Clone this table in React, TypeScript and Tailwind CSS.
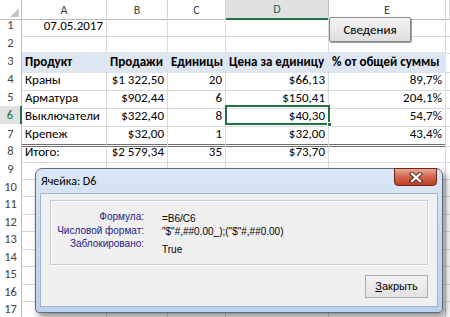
import React from "react";

type Cell = { t?: string; r?: boolean; b?: boolean };

const cols = "grid grid-cols-[22px_85px_61px_58px_103px_117px_1fr]";

const data: Cell[][] = [
  [{ t: "07.05.2017", r: true }, {}, {}, {}, {}],
  [{}, {}, {}, {}, {}],
  [
    { t: "Продукт", b: true },
    { t: "Продажи", b: true },
    { t: "Единицы", b: true },
    { t: "Цена за единицу", b: true },
    { t: "% от общей суммы", b: true },
  ],
  [{ t: "Краны" }, { t: "$1 322,50", r: true }, { t: "20", r: true }, { t: "$66,13", r: true }, { t: "89,7%", r: true }],
  [{ t: "Арматура" }, { t: "$902,44", r: true }, { t: "6", r: true }, { t: "$150,41", r: true }, { t: "204,1%", r: true }],
  [{ t: "Выключатели" }, { t: "$322,40", r: true }, { t: "8", r: true }, { t: "$40,30", r: true }, { t: "54,7%", r: true }],
  [{ t: "Крепеж" }, { t: "$32,00", r: true }, { t: "1", r: true }, { t: "$32,00", r: true }, { t: "43,4%", r: true }],
  [{ t: "Итого:" }, { t: "$2 579,34", r: true }, { t: "35", r: true }, { t: "$73,70", r: true }, {}],
];

const font = { fontFamily: "Calibri, Carlito, 'Liberation Sans', sans-serif" };

const Header = () => (
  <div className={`${cols} h-[16px] text-[12px] text-[#444]`}>
    <div className="relative border-r border-b border-[#bcbcbc] bg-white">
      <div className="absolute right-[2px] bottom-[2px] w-0 h-0 border-l-[9px] border-l-transparent border-b-[9px] border-b-[#c6c6c6]" />
    </div>
    {["A", "B", "C", "D", "E", ""].map((l) =>
      l === "D" ? (
        <div key={l} className="flex items-center justify-center bg-[#e1e1e1] border-r border-[#bcbcbc] border-b-2 border-b-[#217346] text-[#217346]">
          {l}
        </div>
      ) : (
        <div key={l + "x"} className="flex items-center justify-center bg-white border-r border-b border-[#d4d4d4] border-b-[#bcbcbc]">
          {l}
        </div>
      )
    )}
  </div>
);

const Row = ({ n, cells, h }: { n: number; cells: Cell[]; h: string }) => {
  const blue = n === 3;
  const dbl = n === 7;
  return (
    <div className={`${cols} ${h} text-[13px] text-black`}>
      <div
        className={
          n === 6
            ? "flex items-center justify-center bg-[#e1e1e1] border-b border-[#d4d4d4] border-r-2 border-r-[#217346] text-[#217346] text-[12.5px]"
            : "flex items-center justify-center bg-white border-b border-r border-[#d4d4d4] border-r-[#bcbcbc] text-[#444] text-[12.5px]"
        }
      >
        {n}
      </div>
      {[...cells, {}].map((c, i) => (
        <div
          key={i}
          className={`flex items-center whitespace-nowrap overflow-visible px-[3px] ${c.r ? "justify-end" : ""} ${
            c.b ? "font-bold" : ""
          } ${blue && i < 5 ? "bg-[#dde6f1] border-b border-[#dde6f1]" : "border-r border-b border-[#d9d9d9]"} ${
            dbl && i < 5 ? "border-b-[3px] border-b-[#6e6e6e] border-double" : ""
          }`}
        >
          {c.t}
        </div>
      ))}
    </div>
  );
};

const Dialog = () => (
  <div
    className="absolute left-[35px] top-[168px] w-[408px] h-[145px] rounded-t-[7px] rounded-b-[4px] border border-[#5d6c80] bg-gradient-to-b from-[#dbe7f5] via-[#c7d9ee] to-[#bcd1ea] shadow-[3px_4px_6px_rgba(0,0,0,0.45)] flex flex-col"
    style={{ fontFamily: "'Liberation Sans', Arial, sans-serif" }}
  >
    <div className="relative h-[24px] flex items-center pl-[5px] text-[12px] text-black" style={font}>
      Ячейка: D6
      <div className="absolute right-[5px] top-[-1px] w-[43px] h-[18px] rounded-b-[4px] border border-[#6e2618] bg-gradient-to-b from-[#e8a898] via-[#d0644e] to-[#c13d26] flex items-center justify-center">
        <svg width="14" height="11" viewBox="0 0 14 11">
          <path d="M3 2 L11 9 M11 2 L3 9" stroke="#4a160d" strokeWidth="4.2" strokeLinecap="square" />
          <path d="M3 2 L11 9 M11 2 L3 9" stroke="#ffffff" strokeWidth="2.4" strokeLinecap="square" />
        </svg>
      </div>
    </div>
    <div className="mx-[4px] h-[114px] bg-[#f0f0f0] border border-[#9fb3cb] pt-[6px] px-[9px] flex flex-col">
      <div className="h-[65px] border border-[#cdcdcd] shadow-[inset_1px_1px_0_#fff,1px_1px_0_#fff] flex text-[10px]">
        <div className="w-[93px] flex flex-col items-end pt-[9px] text-[#1a1a8c] leading-[13.5px]">
          <div>Формула:</div>
          <div className="whitespace-nowrap">Числовой формат:</div>
          <div>Заблокировано:</div>
        </div>
        <div className="ml-[18px] flex flex-col pt-[11px] text-black leading-[13px]">
          <div>=B6/C6</div>
          <div className="whitespace-nowrap">"$"#,##0.00_);("$"#,##0.00)</div>
          <div className="mt-[5px]">True</div>
        </div>
      </div>
      <div className="flex justify-end mt-[10px]">
        <button className="w-[63px] h-[23px] border border-[#adadad] bg-gradient-to-b from-[#f2f2f2] to-[#e3e3e3] text-[11px] text-black">
          <span className="underline">З</span>акрыть
        </button>
      </div>
    </div>
  </div>
);

export default function App() {
  return (
    <div className="relative w-[450px] h-[317px] overflow-hidden bg-white" style={font}>
      <Header />
      {data.map((cells, i) => (
        <Row key={i} n={i + 1} cells={cells} h="h-[18px]" />
      ))}
      {[9, 10, 11, 12, 13, 14, 15, 16, 17].map((n) => (
        <Row key={n} n={n} cells={[{}, {}, {}, {}, {}]} h="h-[17.5px]" />
      ))}
      {/* selection D6 */}
      <div className="absolute left-[225px] top-[105px] w-[105px] h-[20px] border-2 border-[#217346]">
        <div className="absolute right-[-4px] bottom-[-4px] w-[5px] h-[5px] bg-[#217346] border border-white" />
      </div>
      <button className="absolute left-[329px] top-[17px] w-[82px] h-[25px] rounded-[2px] border border-[#8a8a8a] bg-gradient-to-b from-[#f4f4f4] to-[#dedede] shadow-[1px_1px_0_#9a9a9a] text-[13px] text-black">
        Сведения
      </button>
      <Dialog />
    </div>
  );
}
